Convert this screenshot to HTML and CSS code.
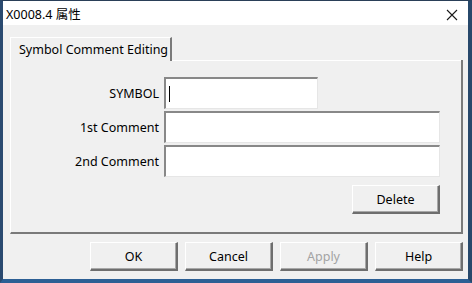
FILE: index.html
```html
<!DOCTYPE html>
<html lang="zh">
<head>
    <meta charset="UTF-8">
    <title>X0008.4 属性</title>
    <link rel="stylesheet" href="styles.css">
</head>
<body>
    <div class="window">
        <!-- Barra de titulo -->
        <div class="titlebar">
            <span class="title">X0008.4 属性</span>
            <svg class="close" width="12" height="12" viewBox="0 0 12 12">
                <path d="M1 1 L11 11 M11 1 L1 11" stroke="#1a1a1a" stroke-width="1.1" fill="none"/>
            </svg>
        </div>

        <div class="client">
            <div class="tabs">
                <div class="tab">Symbol Comment Editing</div>
                <div class="tab-rest"></div>
            </div>
            <div class="panel">
                <div class="form">
                    <label class="lbl">SYMBOL</label>
                    <div class="field short"><span class="caret"></span></div>
                    <label class="lbl">1st Comment</label>
                    <div class="field"></div>
                    <label class="lbl">2nd Comment</label>
                    <div class="field"></div>
                    <button type="button" class="btn delete">Delete</button>
                </div>
            </div>
            <div class="actions">
                <button type="button" class="btn">OK</button>
                <button type="button" class="btn">Cancel</button>
                <button type="button" class="btn disabled">Apply</button>
                <button type="button" class="btn">Help</button>
            </div>
        </div>
    </div>
</body>
</html>
```

FILE: styles.css
```css
body {
    margin: 0;
    padding: 0;
    background-color: #2b5582;
    font-family: "Noto Sans", "Noto Sans CJK SC", sans-serif;
    font-size: 12px;
    color: #000;
}

.window {
    width: 472px;
    height: 283px;
    box-sizing: border-box;
    border-style: solid;
    border-width: 1px 4px 4px 3px;
    border-color: #2a3f58 #27486b #2c5f94 #2a4a70;
    display: flex;
    flex-direction: column;
    background-color: #f0f0f0;
}

.titlebar {
    height: 24px;
    background-color: #fff;
    display: flex;
    align-items: center;
    justify-content: space-between;
    padding: 0 10px 0 3px;
    font-size: 12.5px;
}

.close {
    margin-top: 3px;
}

.client {
    flex: 1;
    padding: 12px 5px 0 7px;
    display: flex;
    flex-direction: column;
}

.tabs {
    display: flex;
    height: 24px;
}

.tab {
    width: 162px;
    box-sizing: border-box;
    padding: 3px 0 0 8px;
    border-top: 1px solid #fff;
    border-left: 1px solid #fff;
    border-right: 2px solid #7a7a7a;
    background-color: #f0f0f0;
    font-size: 12.5px;
    position: relative;
    z-index: 1;
}

.tab-rest {
    flex: 1;
    border-bottom: 1px solid #fff;
}

.panel {
    height: 174px;
    box-sizing: border-box;
    border-left: 1px solid #fff;
    border-right: 2px solid #7a7a7a;
    border-bottom: 2px solid #7a7a7a;
    margin-top: -1px;
    padding-top: 17px;
}

.form {
    display: grid;
    grid-template-columns: 148px 276px;
    column-gap: 5px;
    row-gap: 2px;
    align-items: center;
}

.lbl {
    text-align: right;
    font-size: 12.5px;
}

.field {
    height: 32px;
    box-sizing: border-box;
    background-color: #fff;
    border-style: solid;
    border-width: 2px 1px 1px 2px;
    border-color: #888 #e6e6e6 #e6e6e6 #888;
    display: flex;
    align-items: center;
}

.field.short {
    width: 154px;
}

.caret {
    width: 1px;
    height: 16px;
    margin-left: 3px;
    background-color: #000;
}

.btn {
    width: 88px;
    height: 29px;
    box-sizing: border-box;
    background-color: #f0f0f0;
    border-style: solid;
    border-width: 1px 2px 2px 1px;
    border-color: #fff #6e6e6e #6e6e6e #fff;
    box-shadow: inset -1px -1px 0 #a8a8a8;
    font-family: inherit;
    font-size: 12.5px;
    color: #000;
    padding: 0;
}

.btn.disabled {
    color: #a3a3a3;
}

.delete {
    grid-column: 2;
    justify-self: end;
    margin-top: 6px;
}

.actions {
    display: flex;
    justify-content: flex-end;
    gap: 7px;
    margin-top: 8px;
}
```
